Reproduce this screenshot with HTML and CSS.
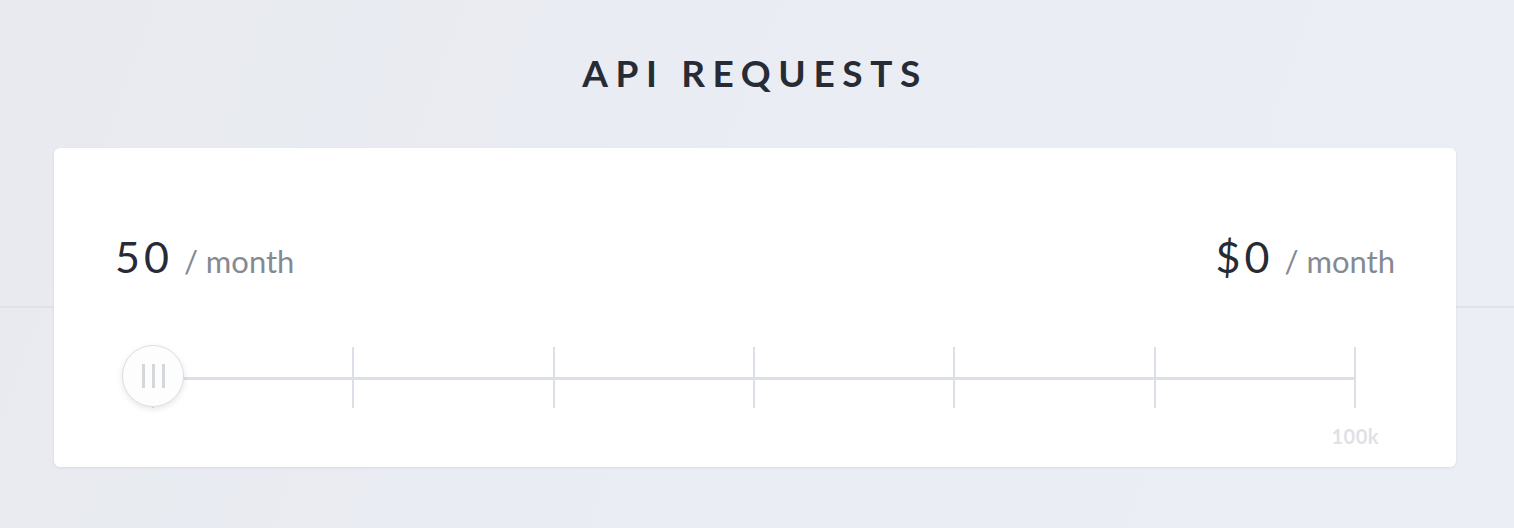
FILE: index.html
```html
<!DOCTYPE html>
<html lang="en">
<head>
<meta charset="utf-8">
<title>API Requests</title>
<link rel="stylesheet" href="styles.css">
</head>
<body>
<main class="page">
  <h1 class="title">API REQUESTS</h1>
  <section class="card">
    <div class="summary">
      <div class="stat"><span class="stat-value">50</span><span class="stat-unit">/ month</span></div>
      <div class="stat"><span class="stat-value">$0</span><span class="stat-unit">/ month</span></div>
    </div>
    <div class="slider">
      <span class="tick"></span><span class="tick"></span><span class="tick"></span><span class="tick"></span><span class="tick"></span><span class="tick"></span><span class="tick"></span>
      <div class="thumb"><span class="grip"></span><span class="grip"></span><span class="grip"></span></div>
    </div>
    <div class="scale">
      <span class="scale-label">100k</span>
    </div>
  </section>
</main>
</body>
</html>
```

FILE: styles.css
```css
* { box-sizing: border-box; }

html, body { height: 100%; }

body {
  margin: 0;
  font-family: Lato, "Open Sans", sans-serif;
  background:
    linear-gradient(to bottom, transparent 306px, #dfe2e8 306px, #dfe2e8 308px, transparent 308px),
    linear-gradient(110deg, #e8eaef 0%, #eaedf4 55%, #eceef5 100%);
}

.page {
  display: flex;
  flex-direction: column;
  align-items: stretch;
  padding: 0 58px 0 54px;
}

.title {
  margin: 51px 0 0;
  height: 97px;
  text-align: center;
  font-size: 37px;
  font-weight: 700;
  letter-spacing: 7.6px;
  color: #262b36;
  line-height: 44px;
}

.card {
  background: #fff;
  border-radius: 6px;
  box-shadow: 0 1px 3px rgba(20, 30, 60, 0.08);
  padding: 87px 61px 21px;
}

.summary {
  display: flex;
  justify-content: space-between;
  align-items: baseline;
  height: 44px;
}

.stat {
  display: flex;
  align-items: baseline;
  gap: 11px;
  line-height: 44px;
}

.stat-value {
  font-size: 43px;
  font-weight: 400;
  letter-spacing: 4px;
  color: #262b36;
}

.stat-unit {
  font-size: 31px;
  color: #858a92;
}

.slider {
  position: relative;
  margin: 68px 39px 0 37px;
  height: 62px;
  display: flex;
  justify-content: space-between;
  background: linear-gradient(to bottom, transparent 30px, #dce0ea 30px, #dce0ea 33px, transparent 33px);
}

.tick {
  width: 2px;
  height: 61px;
  background: #dcdfe8;
}

.thumb {
  position: absolute;
  left: -30px;
  top: -2px;
  width: 62px;
  height: 62px;
  border-radius: 50%;
  background: #fdfdfe;
  border: 1px solid #dcdfe3;
  box-shadow: 0 2px 6px rgba(0, 0, 0, 0.1);
  display: flex;
  justify-content: center;
  align-items: center;
  gap: 7px;
}

.grip {
  width: 3px;
  height: 24px;
  background: #d4d7dc;
}

.scale {
  display: flex;
  justify-content: flex-end;
  padding-right: 16px;
  margin-top: 17px;
}

.scale-label {
  font-size: 20px;
  font-weight: 700;
  letter-spacing: 0.5px;
  color: #dfe1e6;
  line-height: 20px;
}
```
